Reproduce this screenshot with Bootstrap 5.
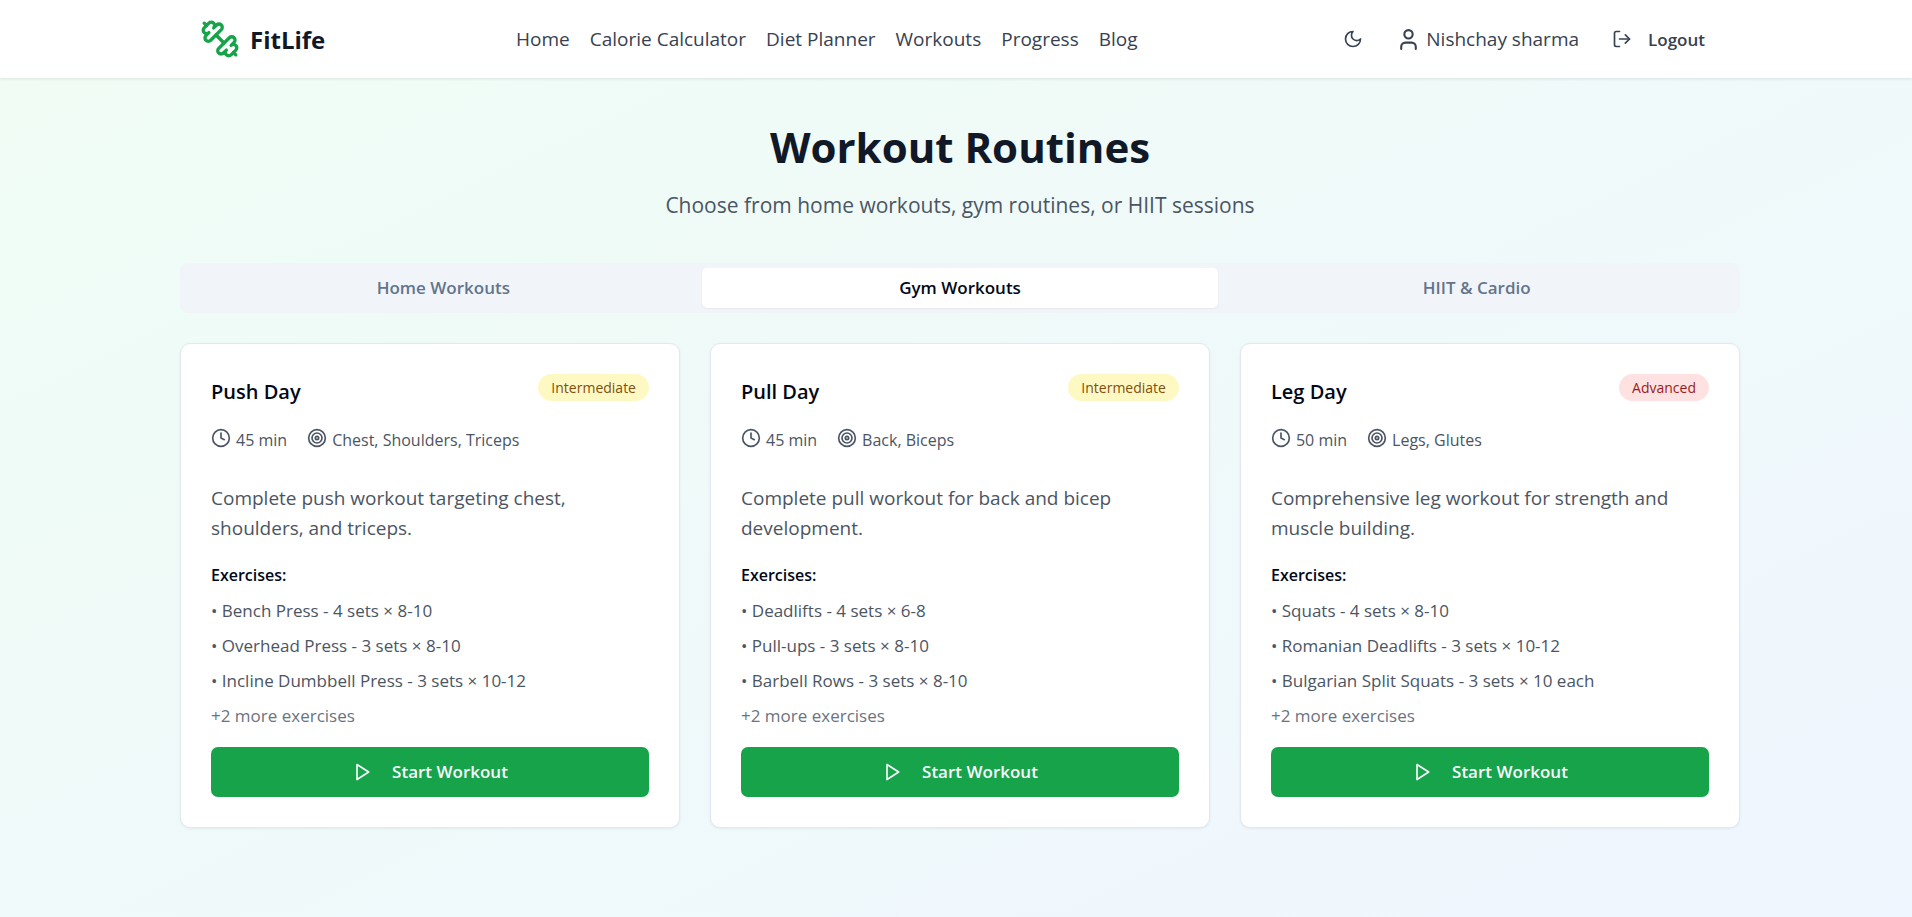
<!DOCTYPE html>
<html lang="en">
<head>
<meta charset="utf-8">
<meta name="viewport" content="width=device-width, initial-scale=1">
<title>FitLife - Workout Routines</title>
<link href="https://cdn.jsdelivr.net/npm/bootstrap@5.3.0/dist/css/bootstrap.min.css" rel="stylesheet">
<style>
  body { font-family: "Open Sans", "Noto Sans", sans-serif; font-size: 16px; line-height: 25px; color: #020817; background: linear-gradient(to bottom right, #f0fdf4, #eff6ff) no-repeat #eff6ff; }
  svg { fill: none; stroke: currentColor; stroke-width: 2; stroke-linecap: round; stroke-linejoin: round; flex: none; }
  .shell { width: 100%; max-width: 1608px; margin: 0 auto; padding: 0 20px 0 28px; }
  .i-20 { width: 20px; height: 20px; }
  .i-25 { width: 25px; height: 25px; }
  .i-40 { width: 40px; height: 40px; }

  .topbar { min-height: 78px; box-shadow: 0 1px 3px rgba(0,0,0,.1); color: #374151; font-size: 19px; }
  .bar-inner { padding: 0 20px; }
  .topbar .nav { gap: 20px; }
  .topbar a, .topbar .btn { color: #374151; }
  .topbar .btn { border: 0; padding: 10px 15px; line-height: 25px; font-size: 17px; font-weight: 600; }
  .topbar .brand { font-size: 24px; font-weight: 700; color: #111827; gap: 10px; }
  .brand svg { color: #16a34a; }
  .account { gap: 18px; }
  .user { gap: 5px; }
  .logout { gap: 16px; }

  main { padding: 44px 0 88px; }
  h1 { font-size: 42px; line-height: 50px; font-weight: 700; color: #111827; margin-bottom: 16px; }
  .subtitle { font-size: 21px; line-height: 35px; color: #4b5563; margin-bottom: 40px; }
  .tabs { background: #f1f5f9; border-radius: 8px; padding: 5px; margin-bottom: 30px; }
  .tabs .nav-link { background: transparent; border: 0; color: #64748b; font-size: 17px; font-weight: 600; border-radius: 5px; padding: 8px 15px; line-height: 24px; }
  .tabs .nav-link.active { background: #fff; color: #020817; box-shadow: 0 1px 2px rgba(0,0,0,.06); }

  .plans { --bs-gutter-x: 30px; --bs-gutter-y: 30px; margin-top: 0; }
  .plans > .col { margin-top: 0; margin-bottom: 30px; }
  .plan { border-color: #e2e8f0; border-radius: 10px; box-shadow: 0 1px 3px rgba(0,0,0,.06); color: #020817; }
  .plan .card-body { padding: 30px; }
  .plan h2 { font-size: 20px; line-height: 36px; font-weight: 600; margin: 0 0 18px; }
  .level { font-size: 14px; line-height: 27px; font-weight: 500; padding: 0 13px; border-radius: 14px; }
  .level-mid { background: #fef9c3; color: #854d0e; }
  .level-high { background: #fee2e2; color: #991b1b; }
  .facts { gap: 20px; color: #4b5563; margin-bottom: 30px; }
  .facts span { gap: 5px; }
  .about { font-size: 19px; line-height: 30px; color: #4b5563; margin-bottom: 20px; }
  .plan h3 { font-size: 16px; line-height: 25px; font-weight: 600; margin-bottom: 10px; }
  .moves { display: grid; gap: 10px; font-size: 17px; color: #4b5563; margin-bottom: 19px; }
  .moves li:last-child { color: #6b7280; }
  .btn-start { --bs-btn-bg: #16a34a; --bs-btn-hover-bg: #15803d; --bs-btn-color: #f8fafc; --bs-btn-hover-color: #f8fafc; border: 0; border-radius: 7px; min-height: 50px; font-size: 17px; font-weight: 600; gap: 20px; }
</style>
</head>
<body class="min-vh-100">
<svg class="d-none" aria-hidden="true">
  <symbol id="clock" viewBox="0 0 24 24"><circle cx="12" cy="12" r="10"/><path d="M12 6v6l4 2"/></symbol>
  <symbol id="target" viewBox="0 0 24 24"><circle cx="12" cy="12" r="10"/><circle cx="12" cy="12" r="6"/><circle cx="12" cy="12" r="2"/></symbol>
  <symbol id="play" viewBox="0 0 24 24"><path d="m6 3 14 9-14 9z"/></symbol>
</svg>
<header class="topbar bg-white d-flex">
  <div class="shell d-flex">
    <div class="bar-inner d-flex flex-wrap align-items-center justify-content-between flex-grow-1">
      <a class="brand d-flex align-items-center text-decoration-none" href="#">
        <svg class="i-40" viewBox="0 0 24 24"><path d="M14.4 14.4 9.6 9.6"/><path d="M18.657 21.485a2 2 0 1 1-2.829-2.828l-1.767 1.768a2 2 0 1 1-2.829-2.829l6.364-6.364a2 2 0 1 1 2.829 2.829l-1.768 1.767a2 2 0 1 1 2.828 2.829z"/><path d="m21.5 21.5-1.4-1.4"/><path d="M3.9 3.9 2.5 2.5"/><path d="M6.404 12.768a2 2 0 1 1-2.829-2.829l1.768-1.767a2 2 0 1 1-2.828-2.829l2.828-2.828a2 2 0 1 1 2.829 2.828l1.767-1.768a2 2 0 1 1 2.829 2.829z"/></svg>
        FitLife
      </a>
      <nav class="nav">
        <a class="nav-link p-0" href="#">Home</a>
        <a class="nav-link p-0" href="#">Calorie Calculator</a>
        <a class="nav-link p-0" href="#">Diet Planner</a>
        <a class="nav-link p-0" href="#">Workouts</a>
        <a class="nav-link p-0" href="#">Progress</a>
        <a class="nav-link p-0" href="#">Blog</a>
      </nav>
      <div class="account d-flex align-items-center">
        <button class="btn d-flex" type="button" aria-label="Dark mode"><svg class="i-20" viewBox="0 0 24 24"><path d="M12 3a6 6 0 0 0 9 9 9 9 0 1 1-9-9Z"/></svg></button>
        <a class="user d-flex align-items-center text-decoration-none" href="#"><svg class="i-25" viewBox="0 0 24 24"><path d="M19 21v-2a4 4 0 0 0-4-4H9a4 4 0 0 0-4 4v2"/><circle cx="12" cy="7" r="4"/></svg>Nishchay sharma</a>
        <button class="logout btn d-flex align-items-center" type="button"><svg class="i-20" viewBox="0 0 24 24"><path d="M9 21H5a2 2 0 0 1-2-2V5a2 2 0 0 1 2-2h4"/><path d="m16 17 5-5-5-5"/><path d="M21 12H9"/></svg>Logout</button>
      </div>
    </div>
  </div>
</header>
<main class="pb-5">
  <div class="shell">
    <div class="text-center">
      <h1>Workout Routines</h1>
      <p class="subtitle">Choose from home workouts, gym routines, or HIIT sessions</p>
    </div>
    <div class="tabs nav nav-justified" role="tablist">
      <button class="nav-link" role="tab" type="button" aria-selected="false">Home Workouts</button>
      <button class="nav-link active" role="tab" type="button" aria-selected="true">Gym Workouts</button>
      <button class="nav-link" role="tab" type="button" aria-selected="false">HIIT &amp; Cardio</button>
    </div>
    <div class="plans row row-cols-1 row-cols-lg-3">
      <div class="col">
        <article class="plan card h-100"><div class="card-body">
          <div class="d-flex justify-content-between align-items-start"><h2>Push Day</h2><span class="level level-mid">Intermediate</span></div>
          <div class="facts d-flex flex-wrap"><span class="d-flex"><svg class="i-20"><use href="#clock"/></svg>45 min</span><span class="d-flex"><svg class="i-20"><use href="#target"/></svg>Chest, Shoulders, Triceps</span></div>
          <p class="about">Complete push workout targeting chest, shoulders, and triceps.</p>
          <h3>Exercises:</h3>
          <ul class="moves list-unstyled"><li>• Bench Press - 4 sets × 8-10</li><li>• Overhead Press - 3 sets × 8-10</li><li>• Incline Dumbbell Press - 3 sets × 10-12</li><li>+2 more exercises</li></ul>
          <button class="btn btn-start w-100 d-flex align-items-center justify-content-center" type="button"><svg class="i-20"><use href="#play"/></svg>Start Workout</button>
        </div></article>
      </div>
      <div class="col">
        <article class="plan card h-100"><div class="card-body">
          <div class="d-flex justify-content-between align-items-start"><h2>Pull Day</h2><span class="level level-mid">Intermediate</span></div>
          <div class="facts d-flex flex-wrap"><span class="d-flex"><svg class="i-20"><use href="#clock"/></svg>45 min</span><span class="d-flex"><svg class="i-20"><use href="#target"/></svg>Back, Biceps</span></div>
          <p class="about">Complete pull workout for back and bicep development.</p>
          <h3>Exercises:</h3>
          <ul class="moves list-unstyled"><li>• Deadlifts - 4 sets × 6-8</li><li>• Pull-ups - 3 sets × 8-10</li><li>• Barbell Rows - 3 sets × 8-10</li><li>+2 more exercises</li></ul>
          <button class="btn btn-start w-100 d-flex align-items-center justify-content-center" type="button"><svg class="i-20"><use href="#play"/></svg>Start Workout</button>
        </div></article>
      </div>
      <div class="col">
        <article class="plan card h-100"><div class="card-body">
          <div class="d-flex justify-content-between align-items-start"><h2>Leg Day</h2><span class="level level-high">Advanced</span></div>
          <div class="facts d-flex flex-wrap"><span class="d-flex"><svg class="i-20"><use href="#clock"/></svg>50 min</span><span class="d-flex"><svg class="i-20"><use href="#target"/></svg>Legs, Glutes</span></div>
          <p class="about">Comprehensive leg workout for strength and muscle building.</p>
          <h3>Exercises:</h3>
          <ul class="moves list-unstyled"><li>• Squats - 4 sets × 8-10</li><li>• Romanian Deadlifts - 3 sets × 10-12</li><li>• Bulgarian Split Squats - 3 sets × 10 each</li><li>+2 more exercises</li></ul>
          <button class="btn btn-start w-100 d-flex align-items-center justify-content-center" type="button"><svg class="i-20"><use href="#play"/></svg>Start Workout</button>
        </div></article>
      </div>
    </div>
  </div>
</main>
<script src="https://cdn.jsdelivr.net/npm/bootstrap@5.3.0/dist/js/bootstrap.bundle.min.js"></script>
</body>
</html>
